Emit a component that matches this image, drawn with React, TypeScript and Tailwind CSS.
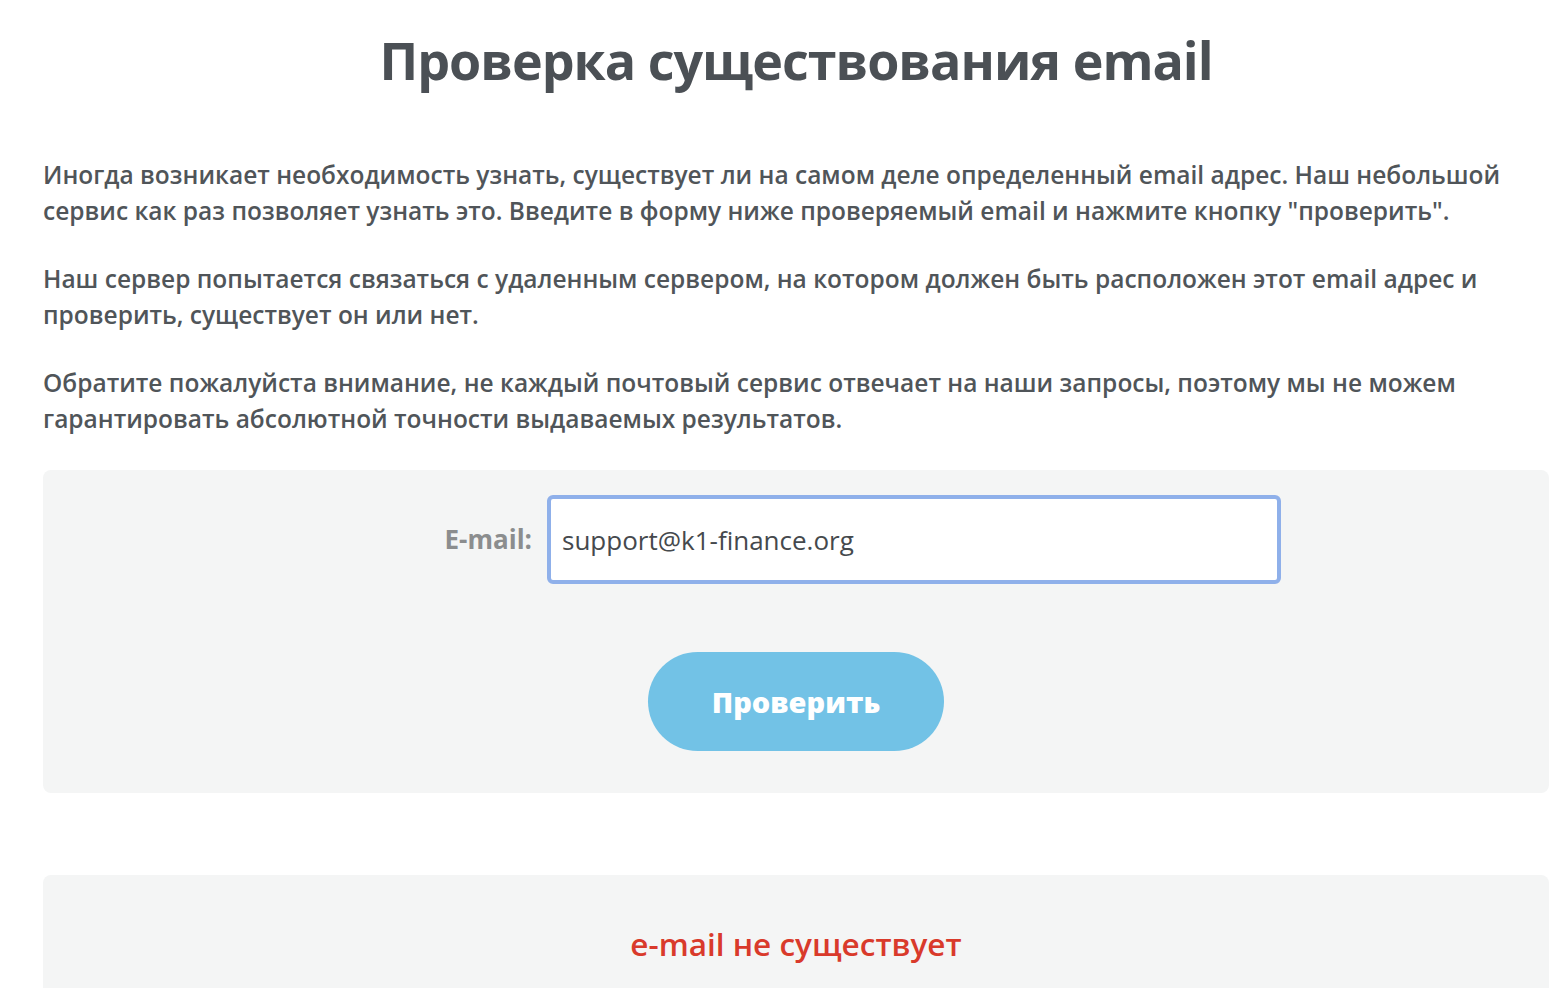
export default function App() {
  return (
    <div className="min-h-[988px] bg-white pl-[43px] pr-[13px] text-[#4b5055]" style={{ fontFamily: '"Open Sans", Lato, sans-serif' }}>
      {/* заголовок */}
      <h1 className="pt-[29px] text-center text-[52px] font-bold leading-[62px] tracking-[-1px] text-[#4b5055]">
        Проверка существования email
      </h1>

      <div className="mt-[66px] space-y-[32px] text-[24.5px] font-semibold leading-[36px] text-[#505559]">
        <p>
          Иногда возникает необходимость узнать, существует ли на самом деле определенный email адрес. Наш небольшой сервис как раз позволяет узнать это. Введите в форму ниже проверяемый email и нажмите кнопку "проверить".
        </p>
        <p>
          Наш сервер попытается связаться с удаленным сервером, на котором должен быть расположен этот email адрес и проверить, существует он или нет.
        </p>
        <p>
          Обратите пожалуйста внимание, не каждый почтовый сервис отвечает на наши запросы, поэтому мы не можем гарантировать абсолютной точности выдаваемых результатов.
        </p>
      </div>

      {/* форма */}
      <div className="mt-[33px] rounded-lg bg-[#f4f5f5] pt-[25px] pb-[42px]">
        <div className="flex items-center">
          <label className="w-[489px] text-right text-[26px] font-bold text-[#8b8d8e]">E-mail:</label>
          <input
            className="ml-[15px] h-[89px] w-[734px] rounded-[6px] border-4 border-[#8fb0ea] bg-white px-[11px] text-[26px] text-[#45494d] outline-none"
            defaultValue="support@k1-finance.org"
          />
        </div>
        <div className="mt-[68px] flex justify-center">
          <button className="h-[99px] w-[296px] rounded-full bg-[#72c2e6] text-[29px] font-extrabold text-white">
            Проверить
          </button>
        </div>
      </div>

      {/* результат */}
      <div className="mt-[82px] rounded-lg bg-[#f4f5f5] pt-[45px] pb-[60px] text-center">
        <span className="text-[31.5px] font-semibold text-[#d93a2b]">e-mail не существует</span>
      </div>
    </div>
  );
}
